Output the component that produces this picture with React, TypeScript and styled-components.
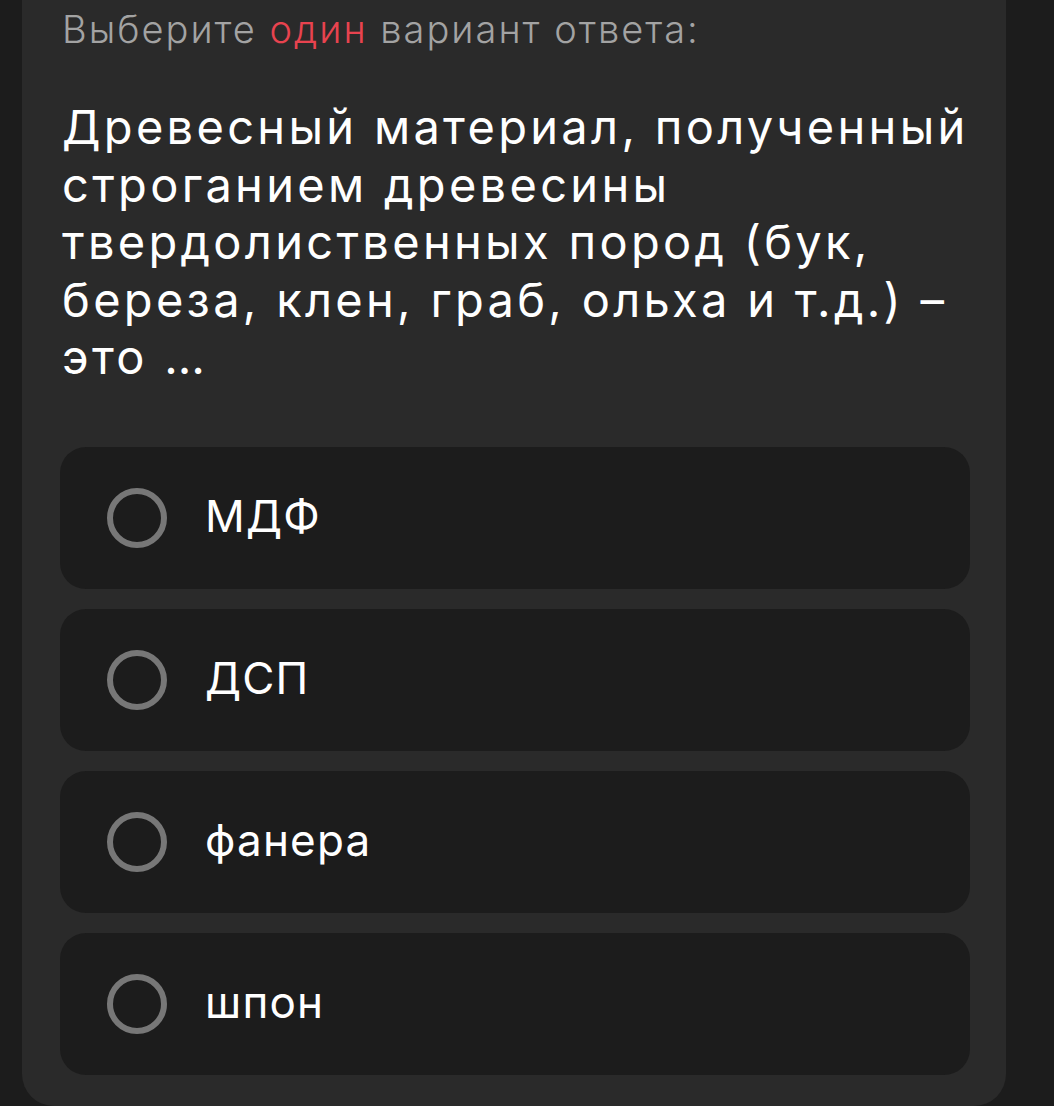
import React, { useState } from "react";
import styled, { createGlobalStyle } from "styled-components";

const GlobalStyle = createGlobalStyle`
  html, body {
    margin: 0;
    padding: 0;
    background: #1c1c1c;
  }
  body {
    font-family: Inter, "Noto Sans", sans-serif;
    -webkit-font-smoothing: antialiased;
  }
`;

const Page = styled.div`
  width: 1054px;
  height: 1106px;
  overflow: hidden;
  padding: 0 48px 0 22px;
  box-sizing: border-box;
`;

const Card = styled.div`
  background: #2a2a2a;
  border-radius: 0 0 32px 32px;
  padding: 7px 36px 31px 38px;
  display: flex;
  flex-direction: column;
`;

const Hint = styled.p`
  margin: 0 0 0 2px;
  font-size: 38px;
  line-height: 44px;
  font-weight: 300;
  color: #a3a3a3;
  letter-spacing: 2px;
  white-space: nowrap;
`;

const Accent = styled.span`
  color: #e8434f;
`;

const Question = styled.h2`
  margin: 47px 0 0 2px;
  font-size: 47px;
  line-height: 57.5px;
  font-weight: 400;
  color: #ffffff;
  letter-spacing: 3.3px;
  white-space: nowrap;
`;

const Ellipsis = styled.span`
  letter-spacing: 0;
`;

const Options = styled.div`
  margin-top: 61px;
  display: flex;
  flex-direction: column;
  gap: 20px;
`;

const Option = styled.label`
  height: 142px;
  border-radius: 26px;
  background: #1c1c1c;
  display: flex;
  align-items: center;
  padding-left: 47px;
  gap: 38px;
  cursor: pointer;
`;

const Radio = styled.span<{ $checked: boolean }>`
  width: 60px;
  height: 60px;
  box-sizing: border-box;
  border-radius: 50%;
  border: 6px solid ${(p) => (p.$checked ? "#e8434f" : "#777777")};
  display: flex;
  align-items: center;
  justify-content: center;
  flex-shrink: 0;

  &::after {
    content: "";
    width: 28px;
    height: 28px;
    border-radius: 50%;
    background: #e8434f;
    display: ${(p) => (p.$checked ? "block" : "none")};
  }
`;

const OptionText = styled.span`
  font-size: 44px;
  line-height: 1;
  color: #ffffff;
  letter-spacing: 1.2px;
  padding-bottom: 4px;
`;

const answers = ["МДФ", "ДСП", "фанера", "шпон"];

const App: React.FC = () => {
  const [selected, setSelected] = useState<number | null>(null);

  return (
    <>
      <GlobalStyle />
      <Page>
        <Card>
          <Hint>
            Выберите <Accent>один</Accent> вариант ответа:
          </Hint>
          <Question>
            Древесный материал, полученный
            <br />
            строганием древесины
            <br />
            твердолиственных пород (бук,
            <br />
            береза, клен, граб, ольха и т.д.) –
            <br />
            это <Ellipsis>…</Ellipsis>
          </Question>
          <Options>
            {answers.map((text, i) => (
              <Option key={text} onClick={() => setSelected(i)}>
                <Radio $checked={selected === i} />
                <OptionText>{text}</OptionText>
              </Option>
            ))}
          </Options>
        </Card>
      </Page>
    </>
  );
};

export default App;
